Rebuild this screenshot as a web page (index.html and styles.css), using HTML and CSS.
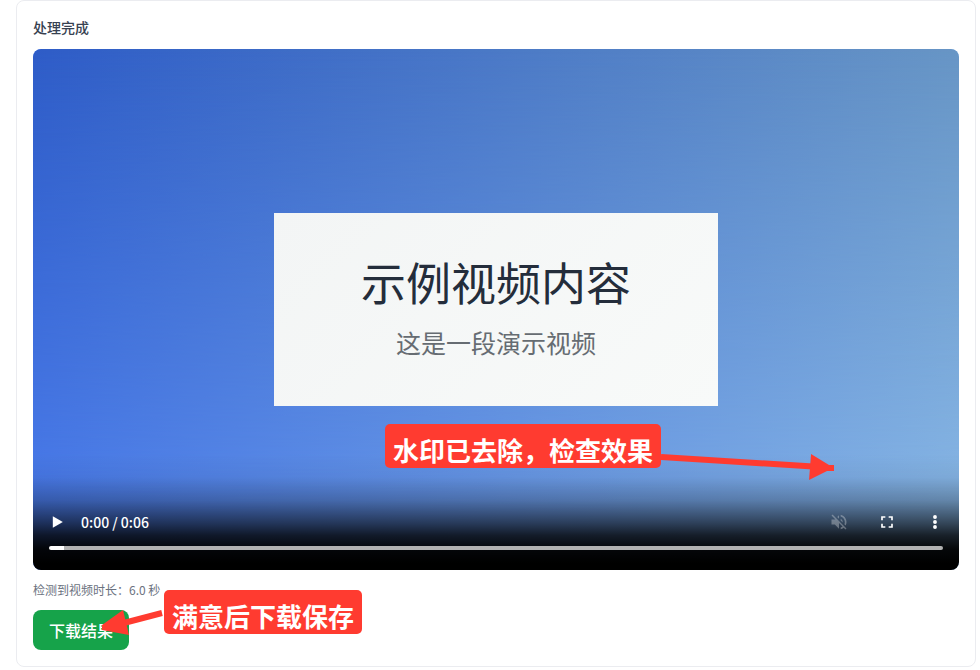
FILE: index.html
```html
<!DOCTYPE html>
<html lang="zh-CN">
<head>
<meta charset="utf-8">
<meta name="viewport" content="width=device-width, initial-scale=1">
<title>处理完成</title>
<link rel="stylesheet" href="styles.css">
</head>
<body>
<main class="result-card">
  <h2 class="result-title">处理完成</h2>
  <section class="player" aria-label="视频预览">
    <div class="slide">
      <p class="slide-title">示例视频内容</p>
      <p class="slide-subtitle">这是一段演示视频</p>
    </div>
    <div class="controls">
      <div class="control-row">
        <button class="control" type="button" aria-label="播放">
          <svg class="icon" viewBox="0 0 24 24"><path d="M7 5v14l12-7z"/></svg>
        </button>
        <span class="time">0:00 / 0:06</span>
        <button class="control control-end" type="button" aria-label="静音" disabled>
          <svg class="icon" viewBox="0 0 24 24"><path d="M16.500 12A4.500 4.500 0 0 0 14 7.970v2.210l2.450 2.450c.03-.2.05-.41.05-.63zm2.500 0c0 .94-.2 1.820-.54 2.640l1.510 1.510A8.800 8.800 0 0 0 21 12c0-4.280-2.990-7.860-7-8.770v2.060c2.890.86 5 3.540 5 6.710zM4.270 3 3 4.270 7.730 9H3v6h4l5 5v-6.730l4.250 4.250c-.67.52-1.420.93-2.250 1.180v2.060a9 9 0 0 0 3.690-1.810L19.730 21 21 19.730l-9-9L4.270 3zM12 4 9.910 6.090 12 8.180V4z"/></svg>
        </button>
        <button class="control" type="button" aria-label="全屏">
          <svg class="icon" viewBox="0 0 24 24"><path d="M7 14H5v5h5v-2H7v-3zm-2-4h2V7h3V5H5v5zm12 7h-3v2h5v-5h-2v3zM14 5v2h3v3h2V5h-5z"/></svg>
        </button>
        <button class="control" type="button" aria-label="更多选项">
          <svg class="icon" viewBox="0 0 24 24"><circle cx="12" cy="6" r="2.300"/><circle cx="12" cy="12" r="2.300"/><circle cx="12" cy="18" r="2.300"/></svg>
        </button>
      </div>
      <input class="timeline" type="range" min="0" max="600" value="10" aria-label="播放进度">
    </div>
    <div class="callout callout-check">水印已去除，检查效果
      <svg class="arrow arrow-right" viewBox="0 0 176 32" aria-hidden="true"><path d="M0 7 160 17" fill="none" stroke="currentColor" stroke-width="6"/><path d="M150 4v1l-2 25 18-9h7v-6h-5z" fill="currentColor"/></svg>
    </div>
  </section>
  <p class="duration">检测到视频时长：6.0 秒</p>
  <div class="actions">
    <button class="download" type="button">下载结果</button>
    <div class="callout callout-save">满意后下载保存
      <svg class="arrow arrow-left" viewBox="0 0 64 32" aria-hidden="true"><path d="M62 7 20 18" fill="none" stroke="currentColor" stroke-width="6"/><path d="M23 4 2 19v5l27 5z" fill="currentColor"/></svg>
    </div>
  </div>
</main>
</body>
</html>
```
FILE: styles.css
```css
* {
  box-sizing: border-box;
}

body {
  margin: 0 4px 0 16px;
  background: #fff;
  font-family: "Noto Sans CJK SC", "Noto Sans", sans-serif;
}

p,
h2 {
  margin: 0;
}

button {
  border: 0;
  padding: 0;
  font-family: inherit;
}

.result-card {
  display: flex;
  flex-direction: column;
  gap: 12px;
  padding: 16px;
  border: 1px solid #ebecf0;
  border-radius: 8px;
}

.result-title {
  color: #374151;
  font-size: 14px;
  font-weight: 500;
  line-height: 20px;
}

.player {
  position: relative;
  display: flex;
  align-items: center;
  justify-content: center;
  aspect-ratio: 16 / 9;
  border-radius: 8px;
  background: linear-gradient(90deg, #4a7bea, #87b6e6);
  isolation: isolate;
}

.player::before {
  content: "";
  position: absolute;
  inset: 0;
  z-index: -1;
  border-radius: inherit;
  background: linear-gradient(90deg, #2e5cc7, #6795c5);
  mask-image: linear-gradient(#000, transparent 90%);
}

.slide {
  display: flex;
  flex-direction: column;
  align-items: center;
  justify-content: center;
  gap: 16px;
  width: 48%;
  height: 37%;
  padding-bottom: 6px;
  background: linear-gradient(135deg, #f3f5f5, #f8faf9);
}

.slide-title {
  color: #242d3b;
  font-size: 45px;
  line-height: 56px;
}

.slide-subtitle {
  color: #666c72;
  font-size: 25px;
  line-height: 32px;
}

.controls {
  position: absolute;
  inset: auto 0 0;
  padding-top: 44px;
  padding-bottom: 20px;
  border-radius: 0 0 8px 8px;
  background: linear-gradient(transparent, rgb(0 0 0 / 5%) 20%, rgb(0 0 0 / 26%) 40%, rgb(0 0 0 / 62%) 60%, rgb(0 0 0 / 82%) 70%, rgb(0 0 0 / 96%) 82%, #000 94%);
}

.control-row {
  display: flex;
  align-items: center;
  height: 48px;
}

.control {
  display: flex;
  align-items: center;
  justify-content: center;
  width: 48px;
  height: 48px;
  background: none;
  color: #fff;
}

.control:disabled {
  color: #fff;
  opacity: 0.3;
}

.control-end {
  margin-left: auto;
}

.icon {
  width: 20px;
  height: 20px;
  fill: currentColor;
}

.time {
  color: #fff;
  font-size: 14px;
  font-weight: 500;
  line-height: 20px;
}

.timeline {
  display: block;
  appearance: none;
  width: calc(100% - 32px);
  height: 4px;
  margin: 0 16px;
  border-radius: 2px;
  background: linear-gradient(90deg, #fff 15px, #b2b2b2 15px);
}

.timeline::-webkit-slider-thumb {
  appearance: none;
  width: 4px;
  height: 4px;
  background: transparent;
}

.callout {
  position: absolute;
  padding: 8px 8px 0;
  border-radius: 5px;
  background: #ff3b30;
  color: #fff;
  font-size: 26px;
  font-weight: 700;
  line-height: 36px;
  white-space: nowrap;
}

.callout-check {
  top: 72%;
  left: 38%;
}

.arrow {
  position: absolute;
  height: 32px;
  color: #ff3b30;
}

.arrow-right {
  top: 26px;
  left: 100%;
  width: 176px;
}

.arrow-left {
  top: 16px;
  right: 100%;
  width: 64px;
}

.duration {
  color: #6b7280;
  font-size: 12px;
  line-height: 16px;
}

.actions {
  position: relative;
  align-self: flex-start;
}

.download {
  display: block;
  padding: 8px 16px;
  border-radius: 8px;
  background: #16a34a;
  color: #fff;
  font-size: 16px;
  font-weight: 500;
  line-height: 24px;
}

.callout-save {
  bottom: 16px;
  left: calc(100% + 35px);
}
```
